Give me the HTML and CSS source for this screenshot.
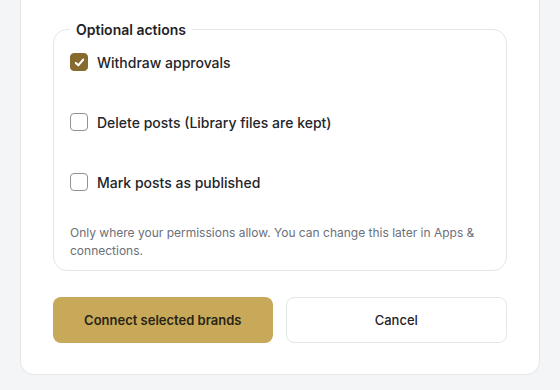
FILE: index.html
```html
<!DOCTYPE html>
<html lang="en">
<head>
  <meta charset="UTF-8" />
  <meta name="viewport" content="width=device-width, initial-scale=1.0" />
  <title>Connect brands</title>
  <link rel="stylesheet" href="styles.css">
</head>
<body>
  <div class="card">
    <fieldset class="options">
      <legend>Optional actions</legend>

      <label class="option">
        <input type="checkbox" checked />
        <span class="box">
          <svg viewBox="0 0 16 16" width="13" height="13"><path d="M3.5 8.5l3 3 6-7" fill="none" stroke="#fff" stroke-width="2.6" stroke-linecap="round" stroke-linejoin="round"/></svg>
        </span>
        <span class="text">Withdraw approvals</span>
      </label>

      <label class="option">
        <input type="checkbox" />
        <span class="box"></span>
        <span class="text">Delete posts (Library files are kept)</span>
      </label>

      <label class="option">
        <input type="checkbox" />
        <span class="box"></span>
        <span class="text">Mark posts as published</span>
      </label>

      <p class="hint">Only where your permissions allow. You can change this later in Apps &amp; connections.</p>
    </fieldset>

    <div class="actions">
      <button class="btn primary">Connect selected brands</button>
      <button class="btn ghost">Cancel</button>
    </div>
  </div>
</body>
</html>
```

FILE: styles.css
```css
* {
  margin: 0;
  padding: 0;
  box-sizing: border-box;
  font-family: 'Inter', 'Liberation Sans', sans-serif;
}

body {
  background: #f3f5f7;
  color: #1f2328;
  height: 100vh;
  overflow: hidden;
}

.card {
  margin-left: 20px;
  width: 520px;
  background: #fff;
  border: 1px solid #e4e7ea;
  border-top: none;
  border-radius: 0 0 14px 14px;
  padding: 21px 32px 31px;
}

.options {
  border: 1px solid #e3e6e9;
  border-radius: 14px;
  padding: 12px 16px 10px;
}

.options legend {
  padding: 0 6px;
  font-size: 14px;
  font-weight: 600;
  color: #1f2328;
}

.option {
  display: flex;
  align-items: center;
  height: 24px;
  margin-bottom: 36px;
  cursor: pointer;
}

.option input {
  display: none;
}

.box {
  width: 18px;
  height: 18px;
  border: 1.5px solid #8e9399;
  border-radius: 4px;
  display: flex;
  align-items: center;
  justify-content: center;
  margin-right: 9px;
}

.option input:checked + .box {
  background: #876a2e;
  border-color: #876a2e;
}

.text {
  font-size: 14px;
  font-weight: 500;
  color: #23262a;
}

.hint {
  margin-top: -6px;
  font-size: 12px;
  line-height: 18px;
  color: #6b7079;
}

.actions {
  display: flex;
  gap: 13px;
  margin-top: 26px;
}

.btn {
  flex: 1;
  height: 46px;
  border-radius: 8px;
  font-size: 13px;
  font-weight: 600;
  cursor: pointer;
}

.btn.primary {
  background: #c8a95a;
  border: none;
  color: #2a2414;
}

.btn.ghost {
  background: #fff;
  border: 1px solid #e3e6e9;
  color: #1f2328;
  font-weight: 500;
}
```
